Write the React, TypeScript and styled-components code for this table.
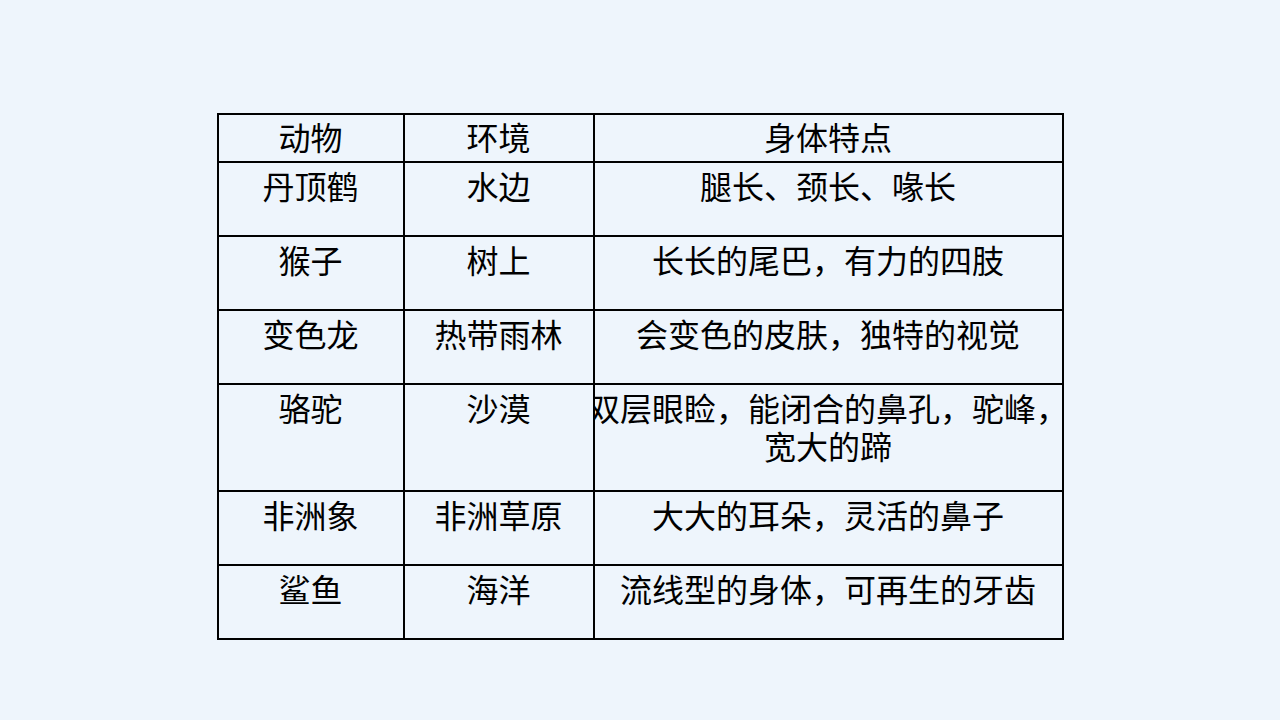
import styled, { createGlobalStyle } from "styled-components";

const GlobalStyle = createGlobalStyle`
  body {
    margin: 0;
    background: #eef5fc;
    font-family: "Noto Sans CJK SC", "Noto Sans", sans-serif;
  }
`;

type Animal = {
  name: string;
  habitat: string;
  traits: string[];
  tall?: boolean;
};

const ANIMALS: Animal[] = [
  { name: "丹顶鹤", habitat: "水边", traits: ["腿长、颈长、喙长"] },
  { name: "猴子", habitat: "树上", traits: ["长长的尾巴，有力的四肢"] },
  { name: "变色龙", habitat: "热带雨林", traits: ["会变色的皮肤，独特的视觉"] },
  {
    name: "骆驼",
    habitat: "沙漠",
    traits: ["双层眼睑，能闭合的鼻孔，驼峰，", "宽大的蹄"],
    tall: true,
  },
  { name: "非洲象", habitat: "非洲草原", traits: ["大大的耳朵，灵活的鼻子"] },
  { name: "鲨鱼", habitat: "海洋", traits: ["流线型的身体，可再生的牙齿"] },
];

export default function App() {
  return (
    <>
      <GlobalStyle />
      <Root>
        <StyledTable>
          <colgroup>
            <col style={{ width: 186 }} />
            <col style={{ width: 190 }} />
            <col style={{ width: 469 }} />
          </colgroup>
          <thead>
            <tr>
              <TitleColumn>动物</TitleColumn>
              <TitleColumn>环境</TitleColumn>
              <TitleColumn>身体特点</TitleColumn>
            </tr>
          </thead>
          <tbody>
            {ANIMALS.map((animal) => (
              <tr key={animal.name}>
                <Cell $tall={animal.tall}>{animal.name}</Cell>
                <Cell $tall={animal.tall}>{animal.habitat}</Cell>
                <Cell $tall={animal.tall}>
                  {animal.traits.map((line) => (
                    <Line key={line}>{line}</Line>
                  ))}
                </Cell>
              </tr>
            ))}
          </tbody>
        </StyledTable>
      </Root>
    </>
  );
}

const Root = styled.main`
  display: flex;
  justify-content: center;
  padding-top: 113px;
`;

const StyledTable = styled.table`
  table-layout: fixed;
  width: 847px;
  border-collapse: separate;
  border-spacing: 0;
  border-top: 2px solid #000;
  border-left: 2px solid #000;
`;

const TitleColumn = styled.th`
  box-sizing: border-box;
  height: 48px;
  padding: 0 0 4px;
  border-right: 2px solid #000;
  border-bottom: 2px solid #000;
  font-size: 32px;
  font-weight: 400;
  line-height: 38px;
  color: #000;
  text-align: center;
  vertical-align: middle;
`;

const Cell = styled.td<{ $tall?: boolean }>`
  box-sizing: border-box;
  height: ${({ $tall }) => ($tall ? "107px" : "74px")};
  padding: 3px 0 0;
  overflow: hidden;
  border-right: 2px solid #000;
  border-bottom: 2px solid #000;
  font-size: 32px;
  line-height: 38px;
  color: #000;
  text-align: center;
  vertical-align: top;
`;

const Line = styled.div`
  display: flex;
  justify-content: center;
  white-space: nowrap;
`;
